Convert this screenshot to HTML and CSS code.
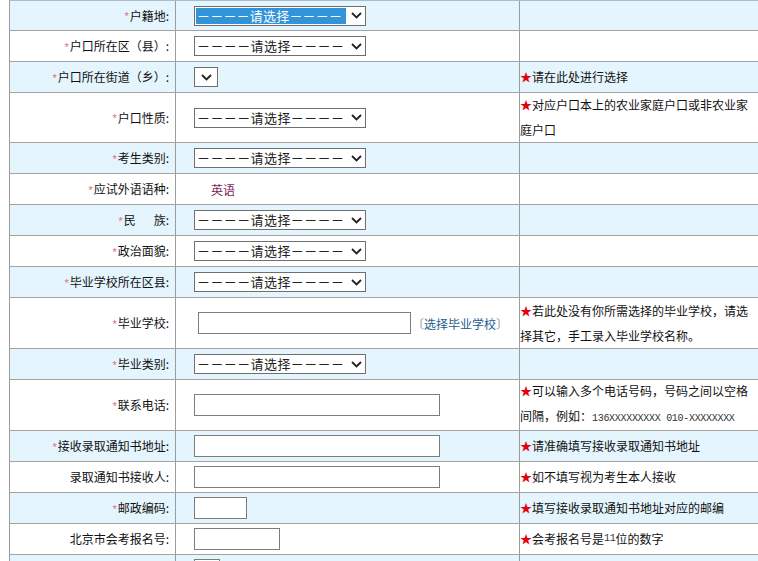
FILE: index.html
```html
<!DOCTYPE html>
<html lang="zh-CN">
<head>
<meta charset="utf-8">
<title>报名信息</title>
<link rel="stylesheet" href="styles.css">
</head>
<body>
<div class="form">
  <div class="row alt first">
    <div class="c lbl"><span class="req">*</span>户籍地:</div>
    <div class="c fld"><span class="sel"><span class="val on">－－－－请选择－－－－</span><span class="arr"><svg width="11" height="7" viewBox="0 0 11 7"><polyline points="1,1 5.5,5.5 10,1" fill="none" stroke="#222" stroke-width="1.8"/></svg></span></span></div>
    <div class="c note"></div>
  </div>
  <div class="row">
    <div class="c lbl"><span class="req">*</span>户口所在区（县）:</div>
    <div class="c fld"><span class="sel"><span class="val">－－－－请选择－－－－</span><span class="arr"><svg width="11" height="7" viewBox="0 0 11 7"><polyline points="1,1 5.5,5.5 10,1" fill="none" stroke="#222" stroke-width="1.8"/></svg></span></span></div>
    <div class="c note"></div>
  </div>
  <div class="row alt">
    <div class="c lbl"><span class="req">*</span>户口所在街道（乡）:</div>
    <div class="c fld"><span class="sel small"><span class="arr"><svg width="11" height="7" viewBox="0 0 11 7"><polyline points="1,1 5.5,5.5 10,1" fill="none" stroke="#222" stroke-width="1.8"/></svg></span></span></div>
    <div class="c note"><span class="star">★</span>请在此处进行选择</div>
  </div>
  <div class="row tall t50">
    <div class="c lbl"><span class="req">*</span>户口性质:</div>
    <div class="c fld"><span class="sel"><span class="val">－－－－请选择－－－－</span><span class="arr"><svg width="11" height="7" viewBox="0 0 11 7"><polyline points="1,1 5.5,5.5 10,1" fill="none" stroke="#222" stroke-width="1.8"/></svg></span></span></div>
    <div class="c note"><p><span class="star">★</span>对应户口本上的农业家庭户口或非农业家<br>庭户口</p></div>
  </div>
  <div class="row alt">
    <div class="c lbl"><span class="req">*</span>考生类别:</div>
    <div class="c fld"><span class="sel"><span class="val">－－－－请选择－－－－</span><span class="arr"><svg width="11" height="7" viewBox="0 0 11 7"><polyline points="1,1 5.5,5.5 10,1" fill="none" stroke="#222" stroke-width="1.8"/></svg></span></span></div>
    <div class="c note"></div>
  </div>
  <div class="row">
    <div class="c lbl"><span class="req">*</span>应试外语语种:</div>
    <div class="c fld"><span class="lang">英语</span></div>
    <div class="c note"></div>
  </div>
  <div class="row alt">
    <div class="c lbl"><span class="req">*</span>民&emsp;&ensp;族:</div>
    <div class="c fld"><span class="sel"><span class="val">－－－－请选择－－－－</span><span class="arr"><svg width="11" height="7" viewBox="0 0 11 7"><polyline points="1,1 5.5,5.5 10,1" fill="none" stroke="#222" stroke-width="1.8"/></svg></span></span></div>
    <div class="c note"></div>
  </div>
  <div class="row">
    <div class="c lbl"><span class="req">*</span>政治面貌:</div>
    <div class="c fld"><span class="sel"><span class="val">－－－－请选择－－－－</span><span class="arr"><svg width="11" height="7" viewBox="0 0 11 7"><polyline points="1,1 5.5,5.5 10,1" fill="none" stroke="#222" stroke-width="1.8"/></svg></span></span></div>
    <div class="c note"></div>
  </div>
  <div class="row alt">
    <div class="c lbl"><span class="req">*</span>毕业学校所在区县:</div>
    <div class="c fld"><span class="sel"><span class="val">－－－－请选择－－－－</span><span class="arr"><svg width="11" height="7" viewBox="0 0 11 7"><polyline points="1,1 5.5,5.5 10,1" fill="none" stroke="#222" stroke-width="1.8"/></svg></span></span></div>
    <div class="c note"></div>
  </div>
  <div class="row tall">
    <div class="c lbl"><span class="req">*</span>毕业学校:</div>
    <div class="c fld"><span class="inp school"></span><a class="pick"><span class="br">〔</span>选择毕业学校<span class="br">〕</span></a></div>
    <div class="c note"><p><span class="star">★</span>若此处没有你所需选择的毕业学校，请选<br>择其它，手工录入毕业学校名称。</p></div>
  </div>
  <div class="row alt">
    <div class="c lbl"><span class="req">*</span>毕业类别:</div>
    <div class="c fld"><span class="sel"><span class="val">－－－－请选择－－－－</span><span class="arr"><svg width="11" height="7" viewBox="0 0 11 7"><polyline points="1,1 5.5,5.5 10,1" fill="none" stroke="#222" stroke-width="1.8"/></svg></span></span></div>
    <div class="c note"></div>
  </div>
  <div class="row tall">
    <div class="c lbl"><span class="req">*</span>联系电话:</div>
    <div class="c fld"><span class="inp wide"></span></div>
    <div class="c note"><p><span class="star">★</span>可以输入多个电话号码，号码之间以空格<br>间隔，例如：<span class="num">136XXXXXXXXX 010-XXXXXXXX</span></p></div>
  </div>
  <div class="row alt">
    <div class="c lbl"><span class="req">*</span>接收录取通知书地址:</div>
    <div class="c fld"><span class="inp wide"></span></div>
    <div class="c note"><span class="star">★</span>请准确填写接收录取通知书地址</div>
  </div>
  <div class="row">
    <div class="c lbl">录取通知书接收人:</div>
    <div class="c fld"><span class="inp wide"></span></div>
    <div class="c note"><span class="star">★</span>如不填写视为考生本人接收</div>
  </div>
  <div class="row alt">
    <div class="c lbl"><span class="req">*</span>邮政编码:</div>
    <div class="c fld"><span class="inp zip"></span></div>
    <div class="c note"><span class="star">★</span>填写接收录取通知书地址对应的邮编</div>
  </div>
  <div class="row">
    <div class="c lbl">北京市会考报名号:</div>
    <div class="c fld"><span class="inp hk"></span></div>
    <div class="c note"><span class="star">★</span>会考报名号是<span class="num">11</span>位的数字</div>
  </div>
  <div class="row alt">
    <div class="c lbl"></div>
    <div class="c fld"><span class="inp tiny"></span></div>
    <div class="c note"></div>
  </div>
</div>
</body>
</html>
```

FILE: styles.css
```css
html, body {
  margin: 0;
  padding: 0;
  background: #ffffff;
  overflow: hidden;
  width: 758px;
  height: 561px;
}

body {
  font-family: "Noto Sans CJK SC", "Noto Sans", sans-serif;
  font-size: 12px;
  color: #111;
}

.form {
  margin-left: 9px;
  width: 760px;
}

.row {
  display: grid;
  grid-template-columns: 166px 344px 250px;
  height: 31px;
  box-sizing: border-box;
  border-bottom: 1px solid #a3a3a3;
  background: #ffffff;
}

.row.alt {
  background: #e5f5fd;
}

.row.first {
  border-top: 1px solid #a9bccb;
}

.row.tall {
  height: 51px;
}

.row.t50 {
  height: 50px;
}

.c {
  border-left: 1px solid #9c9c9c;
  display: flex;
  align-items: center;
  white-space: nowrap;
  overflow: hidden;
}

.lbl {
  justify-content: flex-end;
  padding-right: 6px;
  color: #111;
  padding-bottom: 1px;
}

.req {
  color: #e06a88;
  font-family: "Liberation Sans", sans-serif;
  font-size: 11px;
  margin-right: 1px;
  position: relative;
  top: 1px;
}

.fld {
  padding-left: 18px;
}

.note {
  padding-left: 0;
  color: #111;
  padding-bottom: 1px;
}

.note p {
  margin: 0;
  line-height: 25px;
}

.star {
  color: #e3000f;
}

.num {
  font-family: "Liberation Mono", monospace;
  font-size: 10px;
  letter-spacing: -0.3px;
  color: #333;
}

.sel {
  display: inline-flex;
  align-items: center;
  width: 172px;
  height: 20px;
  box-sizing: border-box;
  border: 1px solid #6f6f6f;
  background: #fff;
}

.sel.small {
  width: 24px;
  justify-content: center;
}

.val {
  flex: 1;
  height: 18px;
  line-height: 18px;
  padding-left: 2px;
  font-size: 13px;
  letter-spacing: 0.4px;
  color: #222;
  overflow: visible;
}

.val.on {
  background: #3193d8;
  color: #ffffff;
  margin: 0 1px;
  padding-left: 1px;
  letter-spacing: 0.2px;
  height: 16px;
  line-height: 16px;
}

.arr {
  width: 18px;
  display: flex;
  justify-content: center;
  align-items: center;
}

.inp {
  display: inline-block;
  height: 22px;
  box-sizing: border-box;
  border: 1px solid #7c7c7c;
  background: #fff;
}

.inp.school {
  width: 213px;
  margin-left: 4px;
}

.inp.wide {
  width: 246px;
}

.inp.zip {
  width: 53px;
}

.inp.hk {
  width: 86px;
}

.inp.tiny {
  width: 26px;
}

.pick {
  color: #245c8c;
  margin-left: 1px;
}

.pick .br {
  color: #8a9bb0;
}

.lang {
  color: #7c1f52;
  padding-left: 17px;
}
```
